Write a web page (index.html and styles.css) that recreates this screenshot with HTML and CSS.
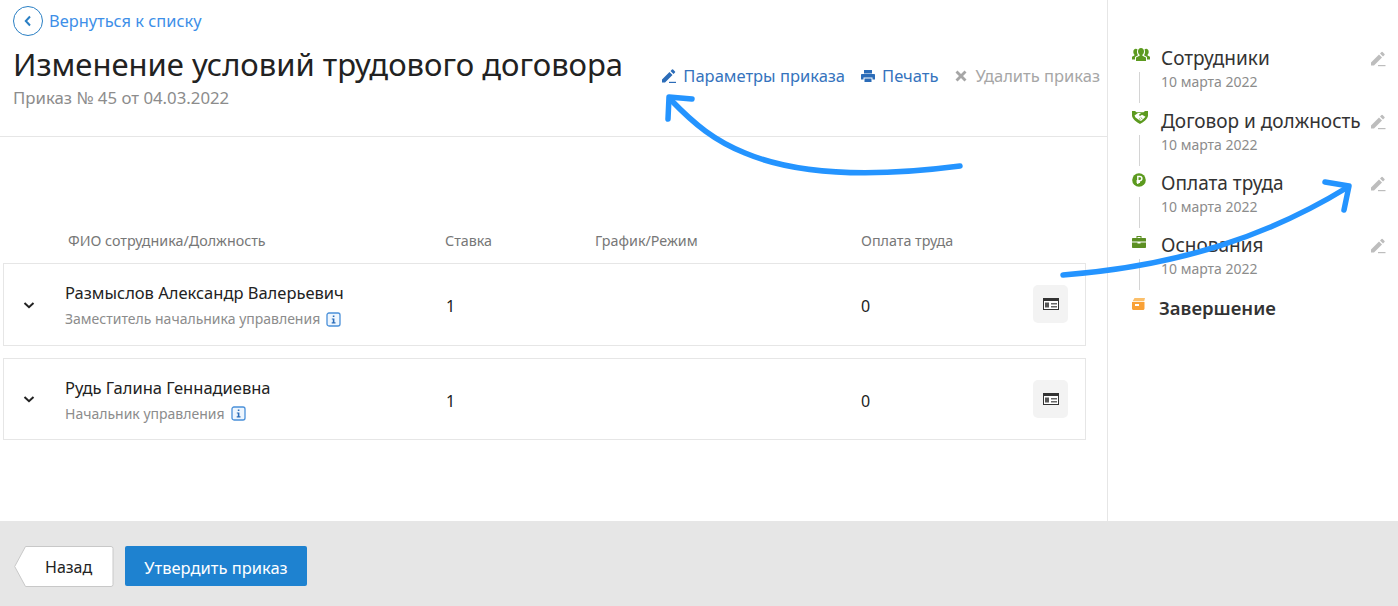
FILE: index.html
```html
<!DOCTYPE html>
<html lang="ru">
<head>
<meta charset="utf-8">
<title>Изменение условий трудового договора</title>
<link rel="stylesheet" href="styles.css">
</head>
<body>
<div class="page">
  <div class="top">
    <main class="main">
      <header class="head">
        <a class="back"><span class="back-circle"><svg width="14" height="14" viewBox="0 0 14 14"><path d="M9 2.500 4.800 7 9 11.500" fill="none" stroke="#2a7fc4" stroke-width="2"/></svg></span>Вернуться к списку</a>
        <div class="title-row">
          <div class="title-block">
            <h1>Изменение условий трудового договора</h1>
            <div class="sub">Приказ № 45 от 04.03.2022</div>
          </div>
          <nav class="actions">
            <a class="act"><svg width="16" height="16" viewBox="0 0 16 16"><path d="M1 11.500 8.500 4l3 3L4 14.500H1zM9.500 3l1.500-1.500a.8.8 0 0 1 1.100 0l1.900 1.900a.8.8 0 0 1 0 1.100L12.500 6z" fill="#2b6cb8"/><path d="M8 13.800h7V15H8z" fill="#2b6cb8"/></svg>Параметры приказа</a>
            <a class="act"><svg width="16" height="16" viewBox="0 0 16 16"><path d="M4 2h8v3.500H4zM2 6h12c.6 0 1 .4 1 1v4.500h-2.500V9.500h-9v2H1V7c0-.6.4-1 1-1zM4.500 10.500h7V14h-7z" fill="#2b6cb8"/></svg>Печать</a>
            <a class="act muted"><svg width="16" height="16" viewBox="0 0 16 16"><path d="M2.500 4.500 4.500 2.500 8 6l3.500-3.500 2 2L10 8l3.500 3.500-2 2L8 10l-3.500 3.500-2-2L6 8z" fill="#a6a6a6"/></svg>Удалить приказ</a>
          </nav>
        </div>
      </header>
      <section class="table">
        <div class="thead">
          <span class="c-name">ФИО сотрудника/Должность</span>
          <span class="c-rate">Ставка</span>
          <span class="c-sched">График/Режим</span>
          <span class="c-pay">Оплата труда</span>
        </div>
        <div class="row row-a">
          <span class="c-chev"><svg width="14" height="14" viewBox="0 0 14 14"><path d="M2.500 5 7 9.200 11.500 5" fill="none" stroke="#222" stroke-width="2"/></svg></span>
          <div class="person">
            <div class="name">Размыслов Александр Валерьевич</div>
            <div class="pos">Заместитель начальника управления<svg class="info" width="15" height="15" viewBox="0 0 15 15"><rect x="1" y="1" width="13" height="13" rx="2" fill="#eef6fe" stroke="#4a90d9" stroke-width="1.300"/><path d="M6.800 3.500h1.600v1.600H6.800zM5.800 6.400h2.600v3.800h1.100v1.200H5.700v-1.200h1.100V7.600h-1z" fill="#2b6cb8"/></svg></div>
          </div>
          <span class="rate">1</span>
          <span class="pay">0</span>
          <span class="card-btn"><svg width="16" height="12" viewBox="0 0 16 12"><path d="M0 0h16v12H0z" fill="#333"/><path d="M1 3h14v8H1z" fill="#fff"/><path d="M2 4.500h4v5H2z" fill="#555"/><path d="M8 5h6v1.500H8zM8 8h6v1.500H8z" fill="#666"/></svg></span>
        </div>
        <div class="row row-b">
          <span class="c-chev"><svg width="14" height="14" viewBox="0 0 14 14"><path d="M2.500 5 7 9.200 11.500 5" fill="none" stroke="#222" stroke-width="2"/></svg></span>
          <div class="person">
            <div class="name">Рудь Галина Геннадиевна</div>
            <div class="pos">Начальник управления<svg class="info" width="15" height="15" viewBox="0 0 15 15"><rect x="1" y="1" width="13" height="13" rx="2" fill="#eef6fe" stroke="#4a90d9" stroke-width="1.300"/><path d="M6.800 3.500h1.600v1.600H6.800zM5.800 6.400h2.600v3.800h1.100v1.200H5.700v-1.200h1.100V7.600h-1z" fill="#2b6cb8"/></svg></div>
          </div>
          <span class="rate">1</span>
          <span class="pay">0</span>
          <span class="card-btn"><svg width="16" height="12" viewBox="0 0 16 12"><path d="M0 0h16v12H0z" fill="#333"/><path d="M1 3h14v8H1z" fill="#fff"/><path d="M2 4.500h4v5H2z" fill="#555"/><path d="M8 5h6v1.500H8zM8 8h6v1.500H8z" fill="#666"/></svg></span>
        </div>
      </section>
    </main>
    <aside class="side">
      <div class="step">
        <span class="step-ico"><svg width="18" height="14" viewBox="0 0 18 14"><path d="M9 0c1.800 0 3 1.400 3 3.400 0 1.500-.8 2.800-1.600 3.300v1.100l3.600 1.700V13H4V9.500l3.600-1.700V6.700C6.800 6.200 6 4.900 6 3.400 6 1.400 7.200 0 9 0z" fill="#5c9a1f"/><path d="M3.800.8c.7 0 1.300.3 1.700.8-.5.9-.5 2-.5 2.600 0 1.100.4 2.200 1 3L3 9v2.500H0V8.800l2.400-1.200v-1C1.800 6.100 1.300 5.100 1.300 3.900 1.300 2.100 2.300.8 3.800.8zM14.200.8c1.500 0 2.500 1.300 2.500 3.100 0 1.200-.5 2.200-1.100 2.700v1L18 8.800v2.700h-3V9l-3-1.800c.6-.8 1-1.900 1-3 0-.6 0-1.700-.5-2.600.4-.5 1-.8 1.700-.8z" fill="#5c9a1f"/></svg></span>
        <div class="step-text"><div class="step-title">Сотрудники</div><div class="step-date">10 марта 2022</div></div>
        <svg class="pencil" width="16" height="16" viewBox="0 0 16 16"><path d="M1 11.500 9 3.500l3 3L4 14.500H1zM10 2.500l1.500-1.500a.8.8 0 0 1 1.100 0l1.900 1.900a.8.8 0 0 1 0 1.100L13 5.500z" fill="#bdbdbd"/><path d="M8 14h7.500v1.200H8z" fill="#bdbdbd"/></svg>
      </div>
      <div class="step">
        <span class="step-ico"><svg width="16" height="13" viewBox="0 0 16 13"><path d="M0 0h3l1.500 1.200h7L13 0h3v4.500C16 8 11 11.500 8 13 5 11.500 0 8 0 4.500z" fill="#5c9a1f"/><path d="M2.500 4.500 6 2h3L6.800 4l1.200 1 2-1.300 3.500 2-3.500 3.500-1.500.8L3.500 6.500z" fill="#fff"/><path d="M8.600 6.400l2 1.800M7 7.500l1.700 1.500" stroke="#5c9a1f" stroke-width=".8" fill="none"/></svg></span>
        <div class="step-text"><div class="step-title">Договор и должность</div><div class="step-date">10 марта 2022</div></div>
        <svg class="pencil" width="16" height="16" viewBox="0 0 16 16"><path d="M1 11.500 9 3.500l3 3L4 14.500H1zM10 2.500l1.500-1.500a.8.8 0 0 1 1.100 0l1.900 1.900a.8.8 0 0 1 0 1.100L13 5.500z" fill="#bdbdbd"/><path d="M8 14h7.500v1.200H8z" fill="#bdbdbd"/></svg>
      </div>
      <div class="step">
        <span class="step-ico"><svg width="14" height="14" viewBox="0 0 14 14"><circle cx="7" cy="7" r="6.800" fill="#5c9a1f"/><path d="M5.800 11V3.500h2a2.100 2.100 0 0 1 0 4.200h-3.200M4.600 9.300h3.400" fill="none" stroke="#fff" stroke-width="1.400"/></svg></span>
        <div class="step-text"><div class="step-title">Оплата труда</div><div class="step-date">10 марта 2022</div></div>
        <svg class="pencil" width="16" height="16" viewBox="0 0 16 16"><path d="M1 11.500 9 3.500l3 3L4 14.500H1zM10 2.500l1.500-1.500a.8.8 0 0 1 1.100 0l1.900 1.900a.8.8 0 0 1 0 1.100L13 5.500z" fill="#bdbdbd"/><path d="M8 14h7.500v1.200H8z" fill="#bdbdbd"/></svg>
      </div>
      <div class="step">
        <span class="step-ico"><svg width="14" height="13" viewBox="0 0 14 13"><path d="M4.500 3V1h5v2h-1V2h-3v1zM1 3h12c.6 0 1 .4 1 1v2.500H0V4c0-.6.4-1 1-1zM0 7.500h5.500v1h3v-1H14V12c0 .6-.4 1-1 1H1c-.6 0-1-.4-1-1z" fill="#5c8f22"/></svg></span>
        <div class="step-text"><div class="step-title">Основания</div><div class="step-date">10 марта 2022</div></div>
        <svg class="pencil" width="16" height="16" viewBox="0 0 16 16"><path d="M1 11.500 9 3.500l3 3L4 14.500H1zM10 2.500l1.500-1.500a.8.8 0 0 1 1.100 0l1.900 1.900a.8.8 0 0 1 0 1.100L13 5.500z" fill="#bdbdbd"/><path d="M8 14h7.500v1.200H8z" fill="#bdbdbd"/></svg>
      </div>
      <div class="step last">
        <span class="step-ico"><svg width="13" height="12" viewBox="0 0 13 12"><path d="M2.500 0H13l-.8 3.300H.6z" fill="#fbbf6a"/><path d="M0 4h12.500v6.500c0 .8-.7 1.500-1.500 1.500H1.500C.7 12 0 11.300 0 10.500zM3 6v2h4V6z" fill="#f9a136"/></svg></span>
        <div class="step-text"><div class="step-title strong">Завершение</div></div>
      </div>
    </aside>
  </div>
  <footer class="foot">
    <button class="btn-back"><svg class="btn-shape" width="100" height="41" viewBox="0 0 100 41"><path d="M11.500.5H97a2 2 0 0 1 2 2v36a2 2 0 0 1-2 2H11.500L.7 20.500z" fill="#fff" stroke="#c8c8c8"/></svg><span class="btn-label">Назад</span></button>
    <button class="btn-primary">Утвердить приказ</button>
  </footer>
  <svg class="arrows" width="1398" height="606" viewBox="0 0 1398 606">
    <g fill="none" stroke="#2494ff" stroke-width="5.500" stroke-linecap="round" stroke-linejoin="round">
      <path d="M960 166C860 179 790 172 745 153 715 141 695 125 670 99"/>
      <path d="M668 119 669 97 692 99"/>
      <path d="M1063 275C1180 266 1270 235 1348 187"/>
      <path d="M1325 182 1349 186 1344 210"/>
    </g>
  </svg>
</div>
</body>
</html>
```

FILE: styles.css
```css
* { box-sizing: border-box; }
html, body { margin: 0; padding: 0; }
body { font-family: "Noto Sans", "Open Sans", sans-serif; color: #222; background: #fff; }
.page { position: relative; width: 1398px; height: 606px; display: flex; flex-direction: column; overflow: hidden; }
.top { height: 521px; display: flex; }
.main { width: 1108px; border-right: 1px solid #e6e6e6; }
.head { height: 137px; border-bottom: 1px solid #e6e6e6; padding: 6px 0 0 13px; }
.back { display: flex; align-items: center; height: 30px; font-size: 16.400px; line-height: 28px; color: #3d8fe8; }
.back-circle { width: 30px; height: 30px; border: 1px solid #2a7fc4; border-radius: 50%; display: flex; align-items: center; justify-content: center; margin-right: 6px; }
.title-row { display: flex; align-items: flex-start; justify-content: space-between; }
.title-block { padding-top: 8px; }
h1 { margin: 0; font-size: 31px; line-height: 40px; font-weight: 400; color: #222; white-space: nowrap; }
.sub { margin-top: 3px; font-size: 16.800px; line-height: 22px; color: #8c8c8c; }
.actions { display: flex; gap: 15px; padding: 28px 7px 0 0; }
.act { display: flex; align-items: center; gap: 6px; font-size: 16.500px; line-height: 24px; color: #3573bd; white-space: nowrap; }
.act.muted { color: #a6a6a6; }
.table { padding: 93px 21px 0 3px; }
.thead { display: grid; grid-template-columns: 442px 150px 266px 1fr; height: 22px; font-size: 14.300px; line-height: 22px; color: #777; }
.c-name { padding-left: 65px; }
.row { display: grid; grid-template-columns: 61px 381px 415px 1fr 35px; align-items: center; border: 1px solid #e6e6e6; padding-right: 17px; }
.row-a { height: 83px; margin-top: 11px; }
.row-b { height: 82px; margin-top: 12px; }
.c-chev { display: flex; padding-left: 18px; }
.name { font-size: 16.500px; line-height: 24px; color: #222; white-space: nowrap; }
.pos { display: flex; align-items: center; gap: 6px; margin-top: 4px; font-size: 14px; line-height: 20px; color: #8c8c8c; white-space: nowrap; }
.person { padding-top: 1px; }
.rate, .pay { font-size: 16px; color: #222; padding-top: 2px; }
.row-b .rate, .row-b .pay { padding-top: 4px; }
.card-btn { width: 35px; height: 38px; border-radius: 5px; background: #f3f3f3; display: flex; align-items: center; justify-content: center; }
.row-a .card-btn { margin-bottom: 1px; }
.side { flex: 1; padding: 44px 0 0 24px; }
.step { position: relative; display: flex; height: 62px; padding-top: 2px; }
.step:nth-child(1), .step:nth-child(4) { height: 63px; }
.step::after { content: ""; position: absolute; left: 7px; top: 28px; height: 31px; border-left: 1px solid #d4d4d4; }
.step.last::after { display: none; }
.step-ico { width: 29px; padding-top: 2px; display: flex; align-items: flex-start; }
.step-text { width: 209px; }
.step-title { font-size: 19px; line-height: 24px; color: #333; white-space: nowrap; }
.step-title.strong { font-size: 18.500px; font-weight: 600; margin-left: -2px; }
.step-date { margin-top: 1px; font-size: 14px; line-height: 22px; color: #8c8c8c; }
.pencil { margin-top: 5px; }
.foot { flex: 1; background: #e6e6e6; display: flex; align-items: flex-start; gap: 12px; padding: 25px 0 0 14px; }
.btn-back { position: relative; width: 99px; height: 40px; border: 0; padding: 2px 0 0 31px; background: none; font: inherit; font-size: 16px; color: #222; text-align: left; }
.btn-shape { position: absolute; left: 0; top: 0; }
.btn-label { position: relative; }
.btn-primary { width: 182px; height: 40px; border: 0; padding: 2px 0 0; border-radius: 2px; background: #1e82d0; color: #fff; font: inherit; font-size: 16.500px; }
.arrows { position: absolute; left: 0; top: 0; pointer-events: none; }
```
